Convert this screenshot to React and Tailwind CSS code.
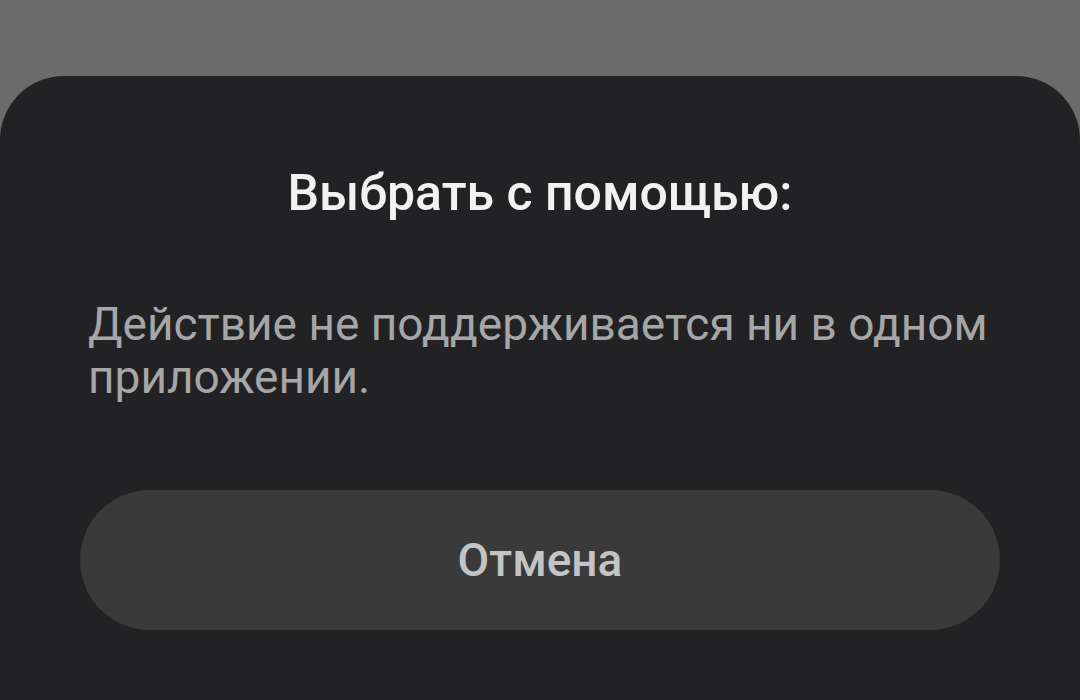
export default function App() {
  return (
    <div className="w-[1080px] h-[700px] bg-[#6b6b6b] overflow-hidden flex flex-col" style={{ fontFamily: 'Roboto, "Noto Sans", sans-serif' }}>
      <div className="h-[76px] shrink-0" />
      <div className="flex-1 bg-[#222224] rounded-t-[64px] flex flex-col px-[80px]">
        <div className="pt-[89px] text-center text-[50px] leading-[56px] font-medium text-[#f2f2f2]">Выбрать с помощью:</div>
        <div className="mt-[77px] pl-[8px] text-[46px] leading-[53px] text-[#a6a6a6]">
          Действие не поддерживается ни в одном приложении.
        </div>
        <div className="mt-[86px] h-[140px] rounded-full bg-[#3a3a3a] flex items-center justify-center text-[46px] font-medium text-[#c4c4c4]">
          Отмена
        </div>
      </div>
    </div>
  );
}
